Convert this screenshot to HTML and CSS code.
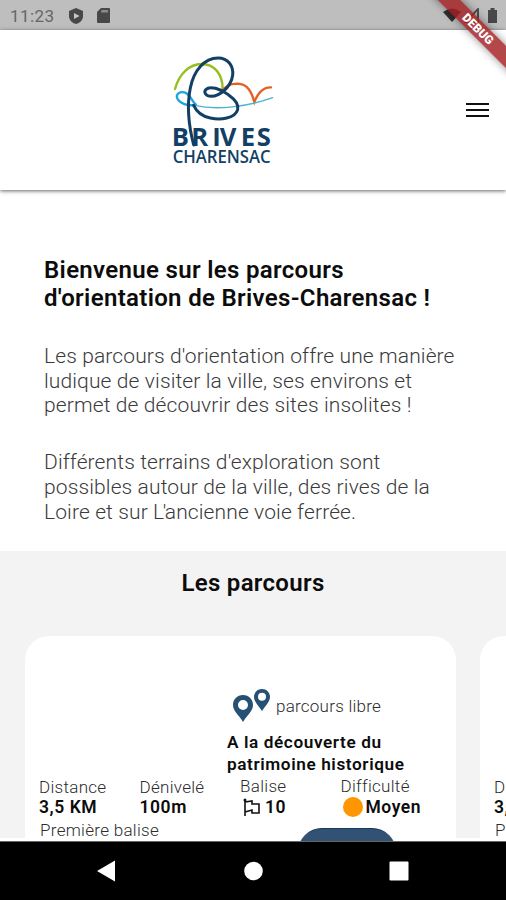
FILE: index.html
```
<!DOCTYPE html>
<html lang="fr">

<head>
    <meta charset="utf-8">
    <title>Brives-Charensac</title>
    <link rel="stylesheet" href="styles.css">
</head>

<body>
    <div class="status">
        <span class="time">11:23</span>
        <svg class="shield" width="14" height="16" viewBox="0 0 14 16">
            <path d="M7 0L14 3V8C14 12 11 15 7 16C3 15 0 12 0 8V3Z" fill="#484848" />
            <path d="M5 5L10.5 8L5 11Z" fill="#c8c8c8" />
        </svg>
        <svg class="sd" width="13" height="15" viewBox="0 0 13 15">
            <path d="M4 0H12Q13 0 13 1V14Q13 15 12 15H1Q0 15 0 14V4Z" fill="#484848" />
            <path d="M4.5 2H11V4.500H4Z" fill="#8c8c8c" />
        </svg>
        <svg class="signals" width="56" height="16" viewBox="0 0 56 16">
            <path d="M1 4Q10-3 19 4L10 14Z" fill="#303030" />
            <path d="M36 1V14H24Z" fill="none" stroke="#484848" stroke-width="1.800" />
            <path d="M46 2H48.500V0H52.500V2H55V15H46Z" fill="#484848" />
        </svg>
    </div>

    <div class="debug"><span>DEBUG</span></div>

    <header class="header">
        <svg class="logo" width="130" height="130" viewBox="0 0 390 390" fill="none" stroke-linecap="round">
            <path d="M45 132C59 82 91 58 124 57C163 57 188 87 188 132" stroke="#93bf1f" stroke-width="7" />
            <path d="M190 133C201 120 215 116 232 116C263 117 274 139 283 171C294 143 310 126 333 127" stroke="#e65f20" stroke-width="7" />
            <path d="M102 180C87 183 57 177 51 158C48 146 60 139 73 142C91 146 94 168 108 179" stroke="#21a3db" stroke-width="7" />
            <path d="M104 181C170 197 263 185 338 158" stroke="#4db3d5" stroke-width="4" />
            <path d="M101 300C85 238 82 173 91 129C101 77 133 39 174 39C205 39 221 64 218 91C213 126 181 153 153 154C137 154 131 142 137 134C149 121 181 131 205 149C226 164 237 180 233 194C225 221 181 226 151 219C127 214 109 199 101 181" stroke="#133f64" stroke-width="9" />
            <text class="logo-top" x="35 94 157 179 242 290" y="302">BRIVES</text>
            <text class="logo-bottom" x="38" y="353" textLength="294" lengthAdjust="spacingAndGlyphs">CHARENSAC</text>
        </svg>
        <div class="menu"><i></i><i></i><i></i></div>
    </header>

    <main>
        <section class="intro">
            <h1>Bienvenue sur les parcours<br>d'orientation de Brives-Charensac !</h1>
            <p>Les parcours d'orientation offre une manière<br>ludique de visiter la ville, ses environs et<br>permet de découvrir des sites insolites !</p>
            <p>Différents terrains d'exploration sont<br>possibles autour de la ville, des rives de la<br>Loire et sur <span class="tight">L'</span>ancienne voie ferrée.</p>
        </section>

        <section class="parcours">
            <h2>Les parcours</h2>
            <div class="cards">
                <article class="card">
                    <div class="top">
                        <div class="mode">
                            <svg width="40" height="34" viewBox="0 0 40 34" fill="#275075" fill-rule="evenodd">
                                <path d="M11 6C5 6 1 10.500 1 16C1 22 7 26 11 33C15 26 21 22 21 16C21 10.500 17 6 11 6ZM11 11A5 5 0 1 1 11 21A5 5 0 1 1 11 11Z" />
                                <path d="M30 0C25.500 0 22 3.500 22 8C22 13 27 17 30 22C33 17 38 13 38 8C38 3.500 34.500 0 30 0ZM30 3.800A4 4 0 1 1 30 11.800A4 4 0 1 1 30 3.800Z" />
                            </svg>
                            <span>parcours libre</span>
                        </div>
                        <h3>A la découverte du<br>patrimoine historique</h3>
                    </div>
                    <div class="stats">
                        <div class="stat"><span>Distance</span><b>3,5 KM</b></div>
                        <div class="stat"><span>Dénivelé</span><b>100m</b></div>
                        <div class="stat raised">
                            <span>Balise</span>
                            <b>
                                <svg class="flag" width="17" height="19" viewBox="0 0 17 19" fill="none" stroke="#111" stroke-width="1.600">
                                    <path d="M2 1V18M2 4L9 3V6H16V15H9V12L2 14" />
                                    <circle cx="2" cy="2" r="1.500" fill="#111" stroke="none" />
                                </svg>10
                            </b>
                        </div>
                        <div class="stat raised">
                            <span>Difficulté</span>
                            <b><i class="level"></i>Moyen</b>
                        </div>
                    </div>
                    <div class="first">Première balise</div>
                    <div class="button"></div>
                </article>
                <article class="card">
                    <div class="top"></div>
                    <div class="stats">
                        <div class="stat"><span>Distance</span><b>3,5 KM</b></div>
                    </div>
                    <div class="first">Première balise</div>
                </article>
            </div>
        </section>
    </main>

    <nav class="navbar">
        <svg width="506" height="58" viewBox="0 0 506 58" fill="#fff">
            <path d="M97 28L115 17.500V38.500Z" />
            <circle cx="253.500" cy="28" r="9.300" />
            <rect x="389.500" y="18.500" width="19" height="19" rx="1" />
        </svg>
    </nav>
</body>

</html>
```
FILE: styles.css
```
* {
    box-sizing: border-box;
}

body {
    margin: 0;
    width: 506px;
    height: 900px;
    overflow: hidden;
    display: flex;
    flex-direction: column;
    position: relative;
    background: #fff;
    color: #0c0c0c;
    font-family: Roboto, sans-serif;
}

h1, h2, h3, p {
    margin: 0;
}

.status {
    height: 30px;
    flex: none;
    display: flex;
    align-items: center;
    padding: 1px 8px 0 10px;
    background: #bebebe;
}

.time {
    width: 59px;
    font-size: 17px;
    letter-spacing: 0.4px;
    color: #666;
}

.sd {
    margin-left: 14px;
}

.signals {
    margin-left: auto;
}

.debug {
    position: absolute;
    top: 0;
    right: 0;
    width: 90px;
    height: 90px;
    overflow: hidden;
    z-index: 2;
}

.debug span {
    position: absolute;
    top: 21px;
    left: -3px;
    width: 130px;
    height: 16px;
    transform: rotate(45deg);
    background: rgba(164, 30, 34, 0.82);
    box-shadow: 0 0 8px rgba(0, 0, 0, 0.45);
    color: #fff;
    font-size: 12px;
    font-weight: 900;
    line-height: 16px;
    text-align: center;
}

.header {
    height: 160px;
    flex: none;
    display: flex;
    align-items: center;
    justify-content: space-between;
    padding: 0 17px 0 160px;
    background: #fff;
    box-shadow: 0 1px 4px rgba(0, 0, 0, 0.6);
    z-index: 1;
}

.logo text {
    fill: #133f64;
    font-family: "Open Sans", sans-serif;
}

.logo-top {
    font-size: 77px;
    font-weight: 700;
}

.logo-bottom {
    font-size: 54px;
    font-weight: 600;
}

.menu {
    width: 23px;
    display: flex;
    flex-direction: column;
    gap: 4px;
}

.menu i {
    height: 2.300px;
    background: #111;
}

main {
    flex: 1;
    min-height: 0;
    overflow: hidden;
}

.intro {
    height: 361px;
    padding: 66px 0 0 44px;
    white-space: nowrap;
}

h1 {
    font-size: 24px;
    font-weight: 600;
    line-height: 28px;
    letter-spacing: 0.33px;
}

.intro p {
    margin-top: 32px;
    font-size: 21px;
    font-weight: 300;
    line-height: 24.700px;
    letter-spacing: 0.120px;
    color: #3a3a3a;
}

.intro .tight {
    letter-spacing: -1.500px;
}

.parcours {
    height: 287px;
    padding-top: 18px;
    background: #f3f3f3;
}

h2 {
    font-size: 24px;
    font-weight: 600;
    line-height: 28px;
    letter-spacing: 0.3px;
    text-align: center;
}

.cards {
    display: flex;
    gap: 24px;
    margin-top: 39px;
    padding-left: 25px;
}

.card {
    flex: none;
    width: 431px;
    height: 300px;
    border-radius: 24px;
    background: #fff;
}

.top {
    height: 141px;
    padding: 53px 0 0 202px;
}

.mode {
    display: flex;
    align-items: center;
    gap: 4px;
    padding-left: 5px;
    font-size: 17px;
    font-weight: 300;
    letter-spacing: 0.240px;
    color: #2c2c2c;
}

h3 {
    margin-top: 8px;
    font-size: 17.200px;
    font-weight: 600;
    line-height: 22px;
    letter-spacing: 0.6px;
    white-space: nowrap;
}

.stats {
    display: grid;
    grid-template-columns: repeat(4, 100.500px);
    padding-left: 14px;
}

.stat {
    display: flex;
    flex-direction: column;
    font-size: 17px;
    font-weight: 300;
    line-height: 20px;
    letter-spacing: 0.3px;
}

.stat span {
    color: #2c2c2c;
}

.stat b {
    height: 22px;
    display: flex;
    align-items: center;
    padding-bottom: 2px;
    font-size: 17.500px;
    font-weight: 600;
    letter-spacing: 0.550px;
}

.raised {
    margin-top: -1px;
}

.raised b {
    padding: 0 0 0 3px;
}

.flag {
    margin-right: 5px;
}

.level {
    width: 20px;
    height: 20px;
    margin: 0 3px 0 -1px;
    border-radius: 50%;
    background: #ff9500;
}

.first {
    padding-left: 15px;
    font-size: 17px;
    font-weight: 300;
    line-height: 22px;
    letter-spacing: 0.3px;
    color: #2c2c2c;
}

.button {
    width: 98px;
    height: 48px;
    margin: -13px 0 0 273px;
    border-radius: 24px;
    background: #315273;
    border-top: 1px solid #173b60;
}

.navbar {
    height: 59px;
    flex: none;
    padding-top: 1px;
    background: #000;
    border-top: 1px solid #666;
}
```
